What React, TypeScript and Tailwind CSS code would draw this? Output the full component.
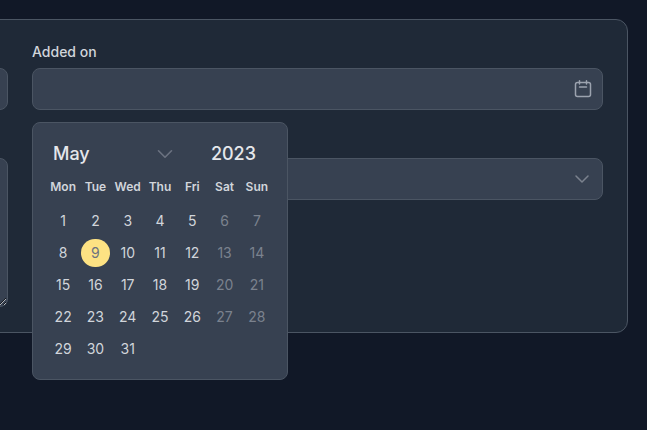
import { ChevronDown } from 'lucide-react';

const weekDays = ['Mon', 'Tue', 'Wed', 'Thu', 'Fri', 'Sat', 'Sun'];
const days = Array.from({ length: 31 }, (_, i) => i + 1);

function CalendarIcon() {
    return (
        <svg width="20" height="20" viewBox="0 0 20 20" fill="none" stroke="currentColor" strokeWidth="1.5" strokeLinecap="round">
            <rect x="2.5" y="3.5" width="15" height="14" rx="2" />
            <path d="M6.5 1.75V5M13.5 1.75V5M6.5 8h7" />
        </svg>
    );
}

function DatePopup() {
    return (
        <div className="absolute top-[78px] left-0 w-[256px] h-[258px] rounded-lg border border-[#4b5563] bg-[#374151] px-[14px] pt-[15px]">
            <div className="flex items-center h-[32px] pl-[6px] pr-[17px] text-lg font-medium text-[#e5e7eb]">
                <span className="w-[99px]">May</span>
                <ChevronDown size={26} strokeWidth={1.5} className="text-[#6b7280]" />
                <span className="ml-auto">2023</span>
            </div>
            <div className="grid grid-cols-7 mt-[3px]">
                {weekDays.map(d => (
                    <div key={d} className="h-[28px] flex items-center justify-center text-xs font-semibold text-[#d1d5db]">{d}</div>
                ))}
            </div>
            <div className="grid grid-cols-7 auto-rows-[32px] mt-[4px]">
                {days.map(d => {
                    const weekend = (d % 7 === 6) || (d % 7 === 0);
                    return (
                        <div key={d} className="flex items-center justify-center">
                            {d === 9 ? (
                                <span className="w-[29px] h-[28px] rounded-full bg-[#fde283] flex items-center justify-center text-sm text-[#6b7280]">{d}</span>
                            ) : (
                                <span className={weekend ? 'text-sm text-[#7b828e]' : 'text-sm text-[#d1d5db]'}>{d}</span>
                            )}
                        </div>
                    );
                })}
            </div>
        </div>
    );
}

export default function App() {
    return (
        <div className="h-[430px] overflow-hidden bg-[#111827] pt-[19px] font-['Inter',sans-serif]">
            <div className="-ml-[217px] mr-[19px] flex gap-6 rounded-xl border border-[#4b5563] bg-[#1f2937] p-6 pb-[25px]">
                <div className="w-[200px] shrink-0">
                    <div className="h-5 mb-1" />
                    <input className="block w-full h-[42px] rounded-lg border border-[#4b5563] bg-[#374151]" />
                    <div className="h-5 mb-1 mt-6" />
                    <textarea className="block w-full h-[149px] rounded-lg border border-[#4b5563] bg-[#374151]" />
                </div>
                <div className="relative flex-1">
                    <label className="block h-5 mb-1 -mt-[2px] pb-[2px] box-content text-sm font-medium text-[#d1d5db]">Added on</label>
                    <div className="flex items-center justify-end h-[42px] rounded-lg border border-[#4b5563] bg-[#374151] pr-[9px] text-[#9ca3af]">
                        <CalendarIcon />
                    </div>
                    <div className="h-5 mb-1 mt-6" />
                    <div className="flex items-center justify-end h-[42px] rounded-lg border border-[#4b5563] bg-[#374151] pr-[8px] text-[#7b828e]">
                        <ChevronDown size={24} strokeWidth={1.5} />
                    </div>
                    <DatePopup />
                </div>
            </div>
        </div>
    );
}
